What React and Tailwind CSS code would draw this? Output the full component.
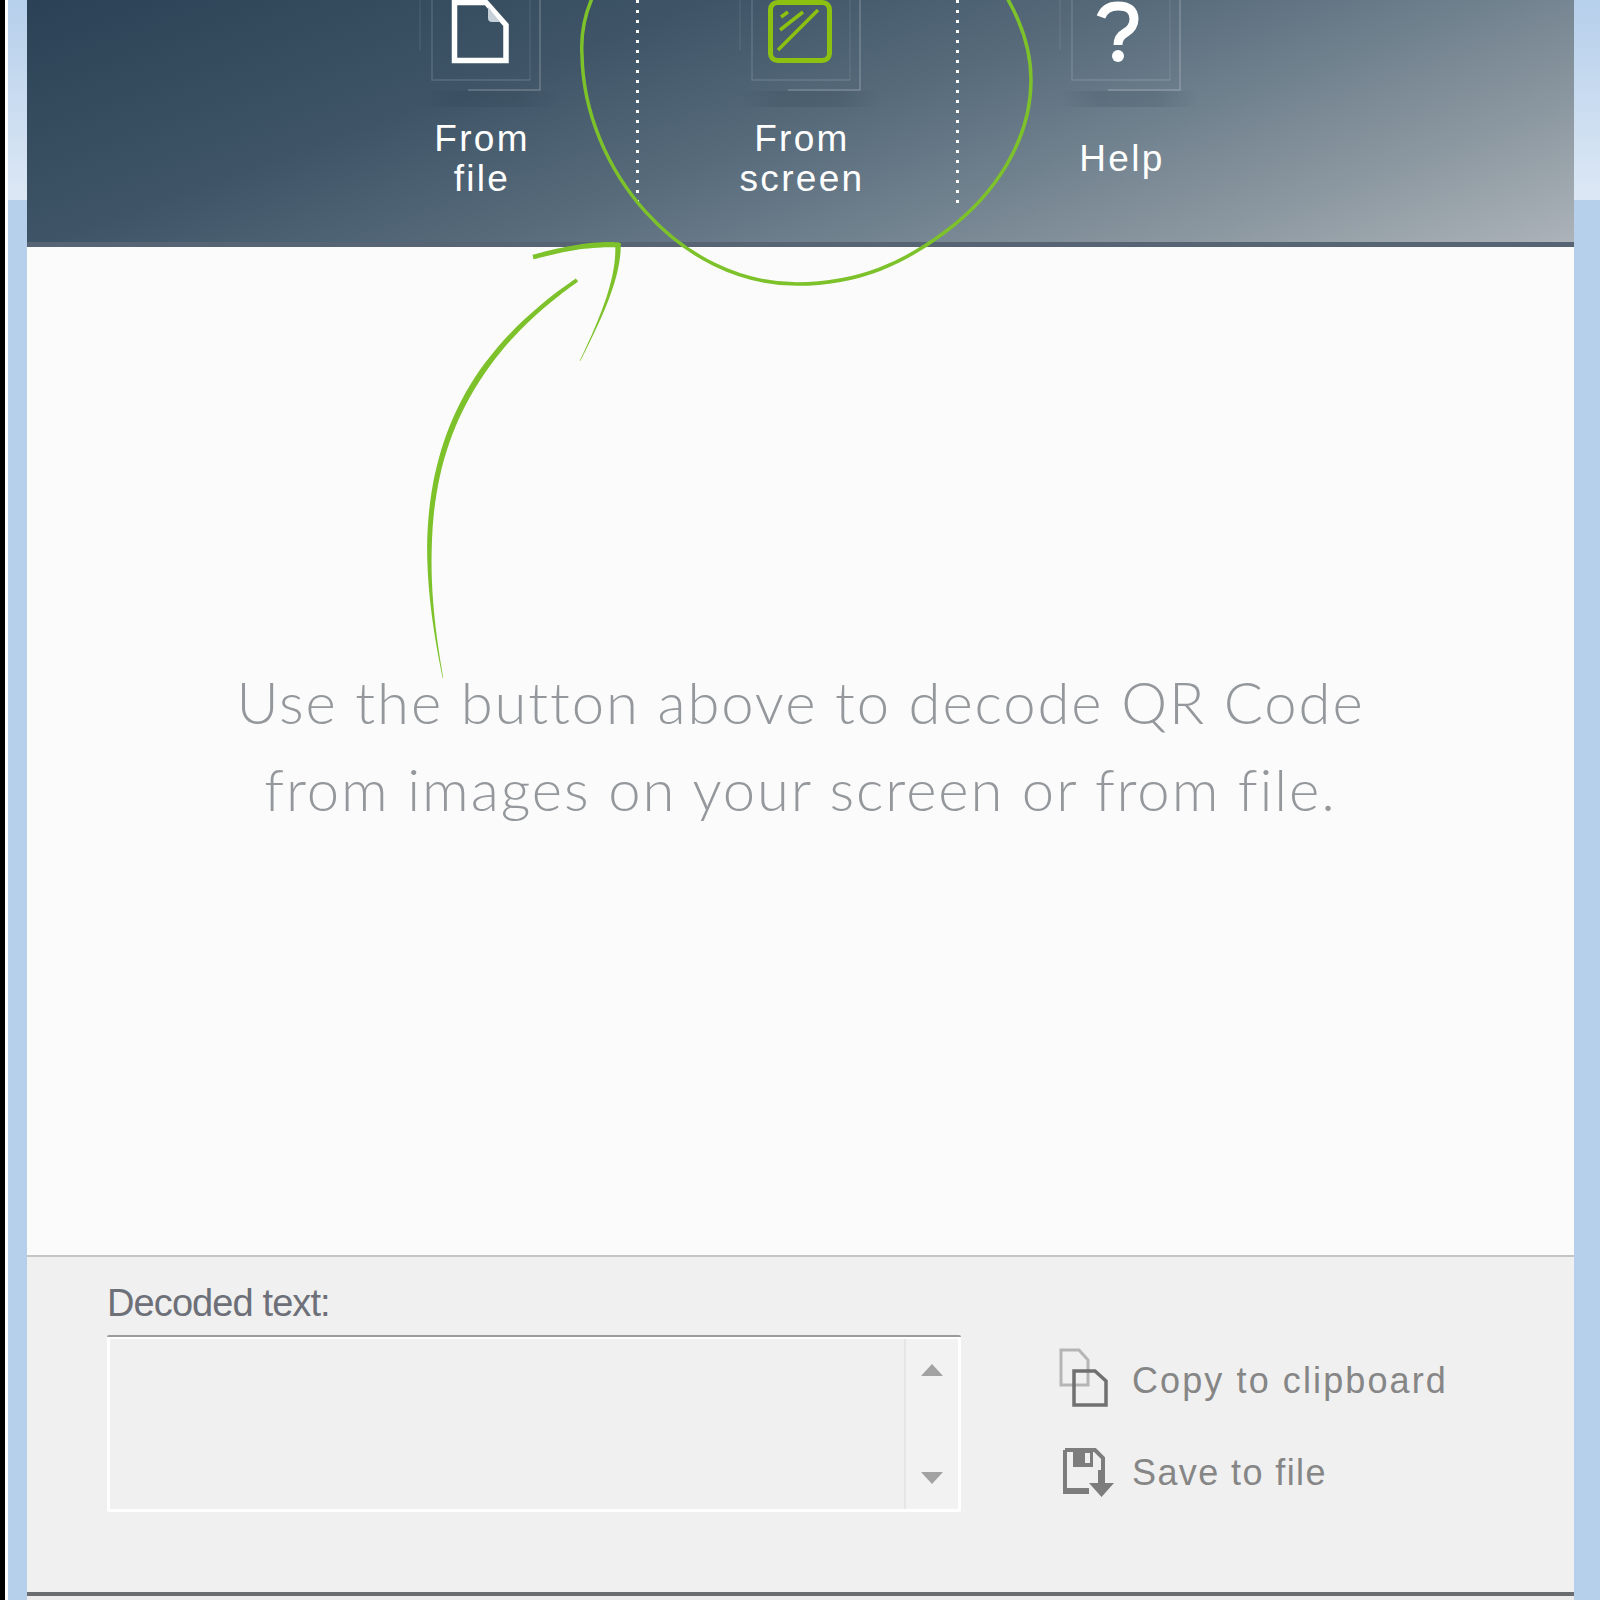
const GREEN = "#7dc22b";

function smooth(p) {
  let d = `M${p[0][0]} ${p[0][1]}`;
  for (let i = 0; i < p.length - 1; i++) {
    const a = p[Math.max(i - 1, 0)], b = p[i], c = p[i + 1], e = p[Math.min(i + 2, p.length - 1)];
    d += ` C${b[0] + (c[0] - a[0]) / 6} ${b[1] + (c[1] - a[1]) / 6} ${c[0] - (e[0] - b[0]) / 6} ${c[1] - (e[1] - b[1]) / 6} ${c[0]} ${c[1]}`;
  }
  return d;
}

// filled brush stroke: points are [x, y, width]
function brush(p) {
  const l = [], r = [];
  p.forEach((q, i) => {
    const a = p[Math.max(i - 1, 0)], c = p[Math.min(i + 1, p.length - 1)];
    const dx = c[0] - a[0], dy = c[1] - a[1], n = Math.hypot(dx, dy) || 1;
    const ox = (-dy / n) * q[2] / 2, oy = (dx / n) * q[2] / 2;
    l.push([q[0] + ox, q[1] + oy]);
    r.unshift([q[0] - ox, q[1] - oy]);
  });
  return smooth(l) + " L" + smooth(r).slice(1) + " Z";
}

function bezierBrush(p0, p1, p2, p3, width, n = 24) {
  const pts = [];
  for (let i = 0; i <= n; i++) {
    const t = i / n, u = 1 - t;
    const x = u * u * u * p0[0] + 3 * u * u * t * p1[0] + 3 * u * t * t * p2[0] + t * t * t * p3[0];
    const y = u * u * u * p0[1] + 3 * u * u * t * p1[1] + 3 * u * t * t * p2[1] + t * t * t * p3[1];
    pts.push([x, y, width(t)]);
  }
  return brush(pts);
}

const circlePath = "M593 -4 Q580 25 582 55 C584 170 680 284 797 284 C860 284 905 262 945 232 C995 195 1031 140 1031 80 C1031 50 1020 20 1006 -4";
const shaft = bezierBrush([443, 678], [412, 520], [425, 385], [577, 280], (t) => (t < 0.3 ? 0.6 + (t / 0.3) * 4.2 : t < 0.7 ? 4.8 + ((t - 0.3) / 0.4) * 1.2 : 6 - ((t - 0.7) / 0.3) * 2));
const headA = bezierBrush([533, 257], [560, 250], [590, 243], [619, 245], (t) => 4.6 + t * 0.8, 10);
const headB = bezierBrush([618, 243], [619, 275], [605, 310], [580, 361], (t) => 5.2 * (1 - t) + 0.5, 14);

function Tile({ children }) {
  return (
    <svg width="320" height="107" viewBox="0 0 320 107" className="block">
      <defs>
        <linearGradient id="tileShade" x1="0" x2="1" y1="0" y2="0">
          <stop offset="0" stopColor="#1d3040" stopOpacity="0" />
          <stop offset="0.3" stopColor="#1d3040" stopOpacity="0.14" />
          <stop offset="0.7" stopColor="#1d3040" stopOpacity="0.14" />
          <stop offset="1" stopColor="#1d3040" stopOpacity="0" />
        </linearGradient>
      </defs>
      <rect x="100" y="91" width="142" height="16" fill="url(#tileShade)" />
      <path d="M102 0V50" stroke="#fff" strokeOpacity="0.08" strokeWidth="1.5" />
      <path d="M114 0V80H212" stroke="#fff" strokeOpacity="0.14" strokeWidth="1.5" fill="none" />
      <path d="M212 0V80" stroke="#fff" strokeOpacity="0.08" strokeWidth="1.5" />
      <path d="M222 0V90H150" stroke="#fff" strokeOpacity="0.22" strokeWidth="1.5" fill="none" />
      {children}
    </svg>
  );
}

function Tool({ label, children, divider }) {
  return (
    <div className="relative w-[320px] shrink-0">
      <Tile>{children}</Tile>
      <div className="mt-[12px] flex h-[80px] items-center justify-center pl-2 text-center font-['Liberation_Sans',sans-serif] text-[37px] leading-[40px] tracking-[2.300px] text-white">
        <span>{label}</span>
      </div>
      {divider && (
        <div className="absolute top-0 right-[-1px] h-[206px] w-[3px] bg-[repeating-linear-gradient(to_bottom,#ffffff_0,#ffffff_3px,transparent_3px,transparent_10px)]" />
      )}
    </div>
  );
}

export default function App() {
  return (
    <div className="relative flex h-[1600px] w-[1600px] overflow-hidden bg-[#f0f0f0] font-['Liberation_Sans',sans-serif]">
      <div className="w-[5px] shrink-0 bg-black" />
      <div className="w-[3px] shrink-0 bg-white" />
      <div className="flex w-[19px] shrink-0 flex-col bg-[#b6cfeb]">
        <div className="h-[200px] bg-[linear-gradient(to_bottom,#b6cfeb,#dce8f5)]" />
      </div>

      <div className="flex w-[1547px] shrink-0 flex-col">
        <header className="flex h-[247px] shrink-0 flex-col bg-[linear-gradient(160deg,#2b4256_0%,#374e60_20%,#3f5567_31%,#566a7a_50%,#70818e_66%,#919ca4_85%,#adb4ba_100%)]">
          <div className="flex flex-1 pl-[291px]">
            <Tool label={<>From<br />file</>} divider>
              <path d="M136.500 2.500H168L188 25V60.500H136.500Z" fill="none" stroke="#fff" strokeWidth="5.500" />
              <path d="M170 7L182 22H174Q170 22 170 18Z" fill="#c5d0d8" />
            </Tool>
            <Tool label={<>From<br />screen</>} divider>
              <rect x="132.500" y="2.500" width="59" height="58" rx="7" fill="none" stroke="#8cc011" strokeWidth="5" />
              <path d="M140 50L180 10M142 30L165 12M143 17L150 12" fill="none" stroke="#8cc011" strokeWidth="3.500" />
            </Tool>
            <Tool label="Help">
              <path d="M143 17Q147 6 160 6Q176 6 176 19Q176 28 167 33Q160 37 160 45" fill="none" stroke="#fff" strokeWidth="9" />
              <circle cx="160" cy="56" r="6" fill="#fff" />
            </Tool>
          </div>
          <div className="h-[5px] shrink-0 bg-[#566473]" />
        </header>

        <main className="flex-1 bg-[#fbfbfb] pt-[411px] text-center font-['Lato',sans-serif] text-[58px] leading-[87px] font-light tracking-[1.900px] text-[#94989c]">
          <p>Use the button above to decode QR Code</p>
          <p>from images on your screen or from file.</p>
        </main>

        <section className="flex h-[337px] shrink-0 border-t-[2px] border-[#c4c6c6] pt-[26px] pl-[80px]">
          <div className="w-[854px] shrink-0">
            <div className="h-[52px] text-[38px] leading-[40px] tracking-[-0.900px] text-[#6d7078]">Decoded text:</div>
            <div className="flex h-[177px] rounded-[2px] border-t-[2px] border-t-[#9b9b9b] bg-white p-[3px] pt-[2px]">
              <div className="flex-1 bg-[#f0f0f0]" />
              <div className="flex w-[54px] flex-col items-center justify-between border-l-[2px] border-[#e6e6e6] bg-[#f2f2f2] py-[24px]">
                <svg width="24" height="14" viewBox="0 0 24 14"><path d="M12 1L23 13H1Z" fill="#a2a2a2" /></svg>
                <svg width="24" height="14" viewBox="0 0 24 14"><path d="M1 1H23L12 13Z" fill="#a2a2a2" /></svg>
              </div>
            </div>
          </div>
          <div className="ml-[98px] flex flex-col pt-[68px] text-[36px] leading-[60px] text-[#868686]">
            <div className="flex h-[60px] items-center tracking-[2.100px]">
              <svg width="73" height="60" viewBox="0 0 73 60" className="-mt-2 shrink-0">
                <path d="M2 3H20L29 13V38H2Z" fill="none" stroke="#b5b5b5" strokeWidth="3" />
                <path d="M15 24H36L47 34V58H15Z" fill="none" stroke="#707070" strokeWidth="3.500" />
              </svg>
              <span>Copy to clipboard</span>
            </div>
            <div className="mt-[37px] flex h-[50px] items-center tracking-[1.400px]">
              <svg width="73" height="50" viewBox="0 0 73 50" className="shrink-0">
                <path d="M6 2H36L44 10V24M30 42H6Z" fill="none" stroke="#7d7d7d" strokeWidth="4" />
                <path d="M6 2V44H30" fill="none" stroke="#7d7d7d" strokeWidth="4" />
                <path d="M14 3H34V19H14Z" fill="#7d7d7d" />
                <path d="M26 5H31V15H26Z" fill="#f0f0f0" />
                <path d="M39 22H46V35H55L42.500 49L30 35H39Z" fill="#7d7d7d" />
              </svg>
              <span>Save to file</span>
            </div>
          </div>
        </section>
        <div className="h-[4px] shrink-0 bg-[#6a6d70]" />
        <div className="h-[4px] shrink-0 bg-[#ececec]" />
      </div>

      <div className="flex w-[26px] shrink-0 flex-col bg-[#b6cfeb]">
        <div className="h-[200px] bg-[linear-gradient(to_bottom,#b6cfeb,#dce8f5)]" />
      </div>

      <svg width="1600" height="1600" viewBox="0 0 1600 1600" className="pointer-events-none absolute top-0 left-0">
        <path d={circlePath} fill="none" stroke={GREEN} strokeWidth="3.500" />
        <path d={shaft} fill={GREEN} />
        <path d={headA} fill={GREEN} />
        <path d={headB} fill={GREEN} />
      </svg>
    </div>
  );
}
